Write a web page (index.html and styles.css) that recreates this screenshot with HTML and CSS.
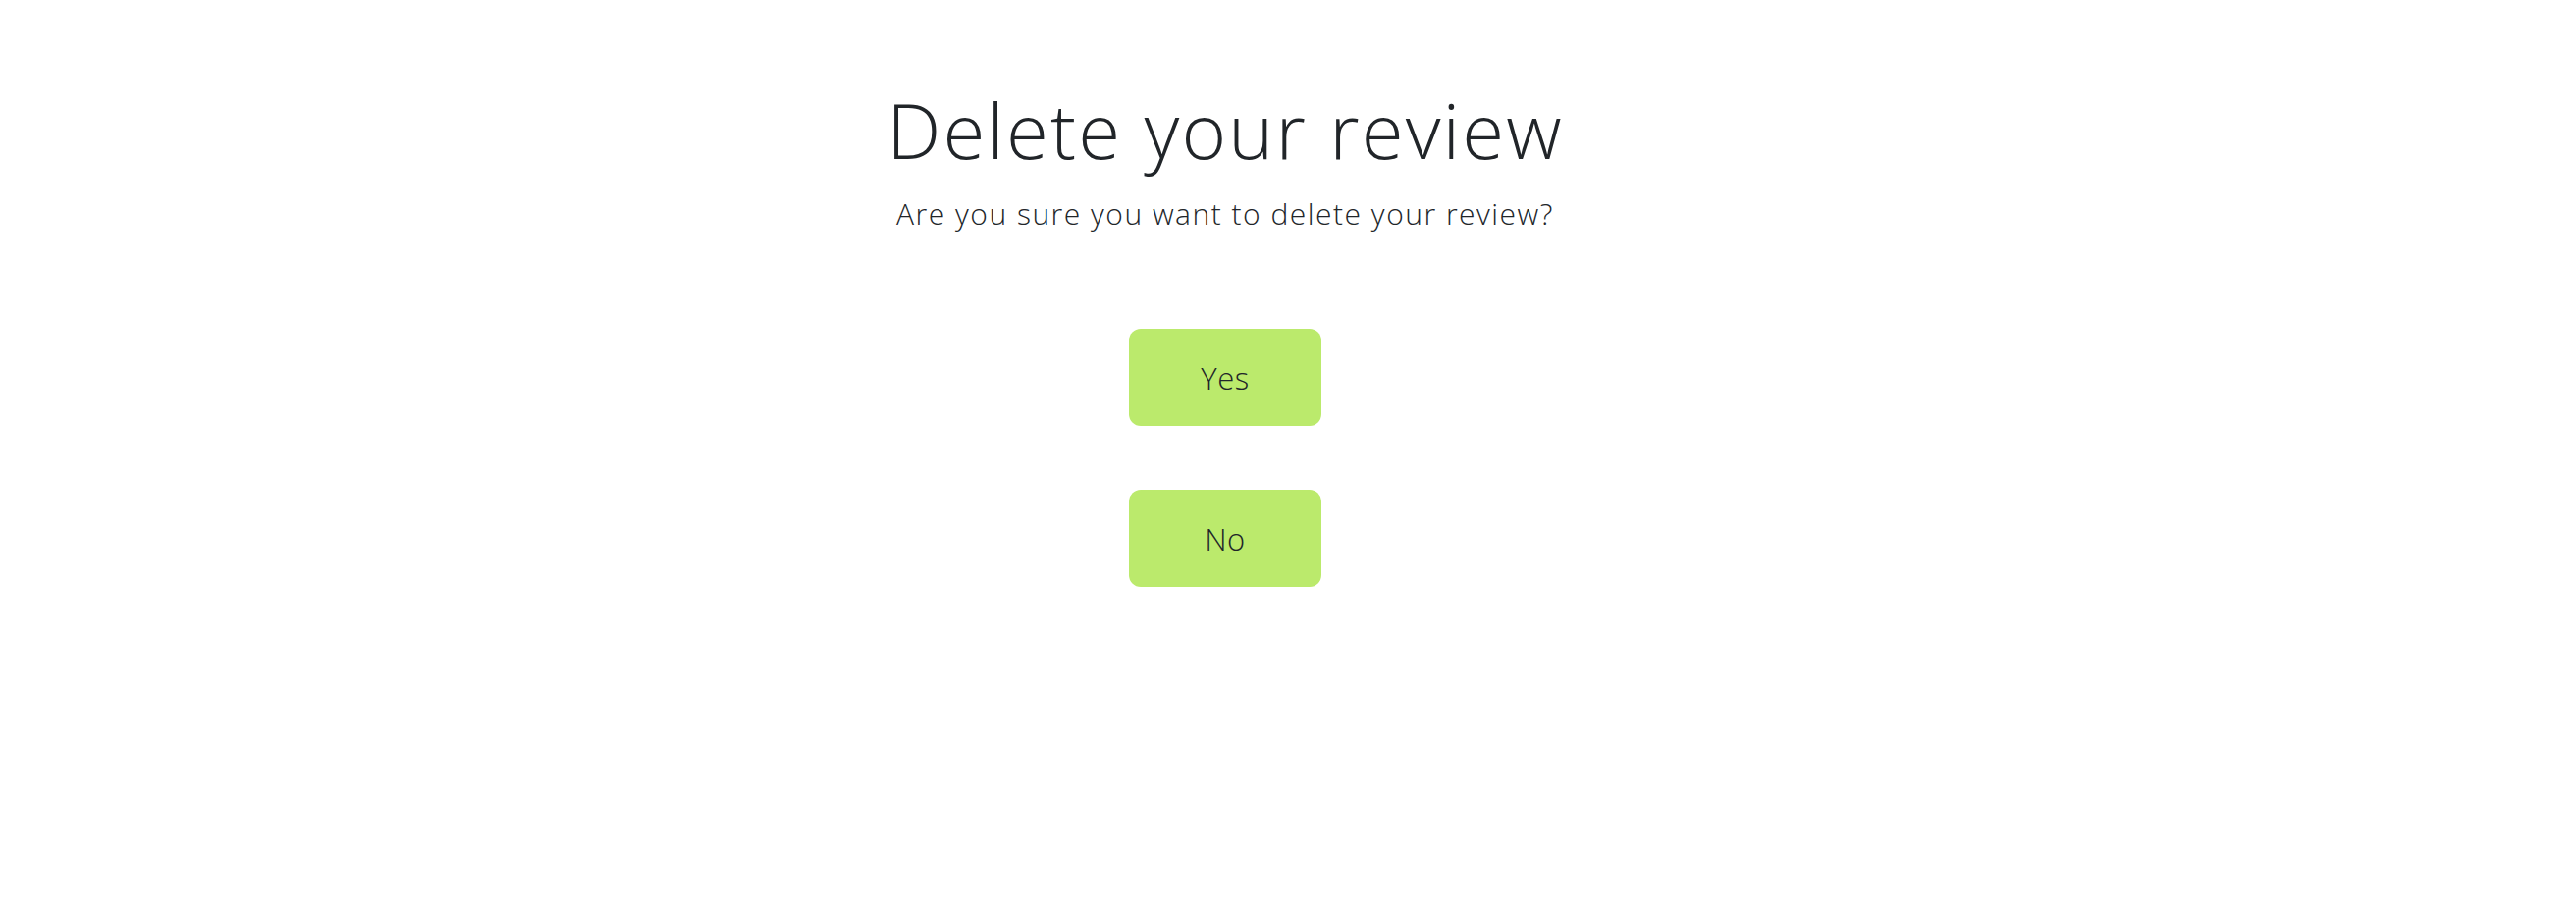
FILE: index.html
```html
<!DOCTYPE html>
<html lang="en">
<head>
<meta charset="utf-8">
<title>Delete your review</title>
<link rel="stylesheet" href="styles.css">
</head>
<body>
<main class="page">
  <section class="confirm">
    <h1 class="confirm-title">Delete your review</h1>
    <p class="confirm-text">Are you sure you want to delete your review?</p>
    <div class="confirm-actions">
      <button class="btn" type="button">Yes</button>
      <button class="btn" type="button">No</button>
    </div>
  </section>
</main>
</body>
</html>
```
FILE: styles.css
```css
html, body {
  margin: 0;
  padding: 0;
  background: #ffffff;
}
body {
  font-family: "Open Sans", "Liberation Sans", sans-serif;
  font-weight: 300;
  color: #212529;
}
.page {
  padding: 85px 128px 0 0;
}
.confirm {
  display: flex;
  flex-direction: column;
  align-items: center;
}
.confirm-title {
  margin: 0;
  font-size: 78px;
  line-height: 94px;
  font-weight: 300;
  letter-spacing: 2.1px;
  white-space: nowrap;
}
.confirm-text {
  margin: 21px 0 0;
  font-size: 30px;
  line-height: 36px;
  letter-spacing: 1.5px;
  white-space: nowrap;
}
.confirm-actions {
  margin-top: 99px;
  display: flex;
  flex-direction: column;
  align-items: center;
  gap: 65px;
}
.btn {
  width: 196px;
  height: 99px;
  border: 0;
  border-radius: 12px;
  background: #bbea6c;
  color: #212529;
  font-family: "Open Sans", "Liberation Sans", sans-serif;
  font-weight: 300;
  font-size: 31px;
  letter-spacing: 0.5px;
  padding: 0;
  cursor: pointer;
}
```
